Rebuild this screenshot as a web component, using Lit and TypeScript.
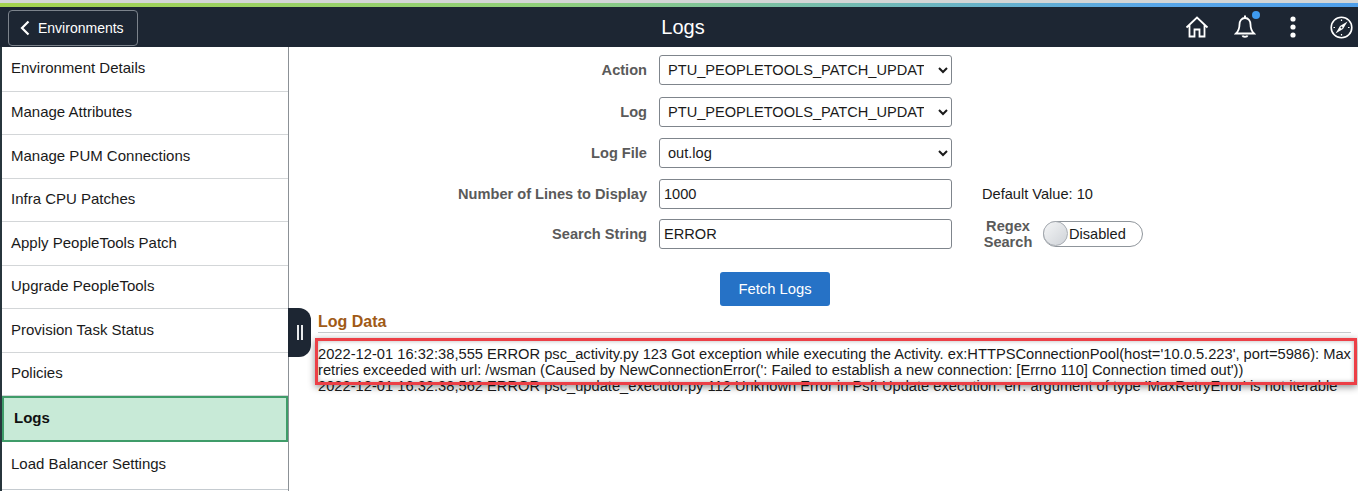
import { LitElement, html, css } from "lit";
import { customElement } from "lit/decorators.js";

const NAV = [
  ["Environment Details", 45], ["Manage Attributes", 43], ["Manage PUM Connections", 44], ["Infra CPU Patches", 43],
  ["Apply PeopleTools Patch", 44], ["Upgrade PeopleTools", 43], ["Provision Task Status", 44], ["Policies", 43],
] as const;

@customElement("app-root")
export class AppRoot extends LitElement {
  static styles = css`
    :host { display: block; width: 1358px; height: 491px; overflow: hidden; background: #fff; font-family: "Liberation Sans", Arial, sans-serif; color: #1a1a1a; position: relative; }
    * { box-sizing: border-box; }
    .strip { height: 7px; border-top: 3px solid #d4d6d6; background: linear-gradient(90deg, #a4d34e 0%, #8fcf7a 40%, #58a6e8 85%, #4f9fea 100%); }
    .bar { height: 40px; background: #1d2633; display: flex; align-items: center; padding: 0 0 0 8px; position: relative; }
    .back { width: 130px; height: 36px; margin-top: 1px; border: 1px solid #7c838c; border-radius: 4px; display: flex; align-items: center; gap: 8px; padding-left: 11px; color: #fff; font-size: 14px; }
    .title { position: absolute; left: 8px; right: 0; top: 0; height: 40px; line-height: 40px; text-align: center; color: #fff; font-size: 20px; }
    .icons { margin-left: auto; display: flex; align-items: center; position: relative; z-index: 1; height: 40px; padding-right: 5px; }
    .icons svg { display: block; }
    .home { margin-right: 25px; }
    .bell-wrap { position: relative; margin-right: 34px; }
    .dot { position: absolute; left: 18px; top: -4px; width: 8px; height: 8px; border-radius: 50%; background: #3f9bf0; }
    .dots { margin-right: 34px; }
    .body { display: flex; height: 444px; border-left: 2px solid #27353c; }
    .side { width: 287px; flex: none; border-right: 1px solid #8c9196; height: 100%; }
    .item { display: flex; align-items: center; padding: 0 0 3px 9px; font-size: 15px; color: #1a1a1a; border-bottom: 1px solid #d3d6d8; }
    .item.active { height: 46px; padding: 0 0 3px 10px; background: #c8ead7; border: 2px solid #3f9c69; font-weight: 700; color: #111; }
    .item.lb { height: 48px; padding-bottom: 4px; border-bottom-color: #c5cbd0; }
    .main { flex: 1; min-width: 0; padding: 8px 0 0 29px; position: relative; }
    .form { display: grid; grid-template-columns: 329px 293px auto; column-gap: 12px; align-items: center; }
    .l { text-align: right; font-size: 14.6px; font-weight: 700; color: #5a5a5a; }
    .f { height: 30px; width: 293px; border: 1px solid #7f858c; border-radius: 3px; background: #fff; font: 14.6px "Liberation Sans", Arial, sans-serif; color: #1a1a1a; padding: 0 4px; margin: 0; display: block; outline: none; }
    select.f { padding: 0 11px 0 4px; }
    .r1 { margin-bottom: 12px; }
    .r2 { margin-bottom: 11px; }
    .r3 { margin-bottom: 9px; }
    .note { padding-left: 18px; font-size: 14.6px; display: flex; align-items: center; }
    .regex { padding-left: 19px; display: flex; align-items: center; gap: 10px; }
    .regex .l { width: 50px; text-align: center; line-height: 16px; }
    .toggle { width: 100px; height: 26px; border: 1px solid #8f959b; border-radius: 13px; display: flex; align-items: center; font-size: 14.6px; color: #1a1a1a; margin-top: -1px; }
    .knob { width: 25px; height: 25px; border-radius: 50%; margin-left: -1px; margin-right: 1px; flex: none; background: linear-gradient(135deg, #f4f5f6, #cfd3d8); border: 1px solid #a8adb3; }
    .actions { display: flex; padding: 22px 0 0 402px; }
    .btn { width: 110px; height: 34px; background: #2672c6; color: #fff; border: none; border-radius: 3px; font: 14.8px "Liberation Sans", Arial, sans-serif; padding: 0; }
    .sec { margin-top: 2px; margin-right: 7px; }
    h2 { margin: 0; height: 25px; font-size: 16px; line-height: 18px; padding-top: 5px; color: #a05a16; border-bottom: 1px solid #c8cbce; font-weight: 700; }
    .log { margin: 0; padding-top: 13px; font-size: 14.7px; line-height: 16px; color: #1a1a1a; }
    .hl { position: absolute; left: 26px; top: 291px; width: 1042px; height: 47px; border: 3px solid #ec3f46; background: transparent; box-shadow: 0 2px 7px rgba(0,0,0,.45), inset 0 0 4px rgba(0,0,0,.3); pointer-events: none; }
    .grip { position: absolute; left: -1px; top: 261px; width: 23px; height: 49px; background: #1d2633; border-radius: 0 12px 12px 0; display: flex; justify-content: center; align-items: center; gap: 2px; }
    .grip i { width: 2px; height: 15px; background: #e8eaec; display: block; }
  `;

  render() {
    return html`
      <div class="strip"></div>
      <div class="bar">
        <div class="back">
          <svg width="10" height="16" viewBox="0 0 10 16"><path d="M8.5 1.500 2 8l6.500 6.500" fill="none" stroke="#fff" stroke-width="2.200"/></svg>
          <span>Environments</span>
        </div>
        <div class="title">Logs</div>
        <div class="icons">
          <svg class="home" width="24" height="22" viewBox="0 0 24 22" fill="none" stroke="#fff" stroke-width="1.800"><path d="M1.500 11.500 12 1.500l10.500 10M4.500 9v11.500H9.500V13.500H14.500V20.500H19.500V9"/></svg>
          <div class="bell-wrap">
            <svg width="22" height="24" viewBox="0 0 22 24" fill="none" stroke="#fff" stroke-width="1.800"><path d="M11 3c-3.600 0-5.500 3-5.500 6.500 0 4.500-1.500 7-3.500 9h18c-2-2-3.500-4.500-3.500-9C16.500 6 14.600 3 11 3Z"/><path d="M11 .5v2.500M8.500 20.500c.5 1.800 4.500 1.800 5 0" stroke-width="2"/></svg>
            <span class="dot"></span>
          </div>
          <svg class="dots" width="6" height="22" viewBox="0 0 6 22" fill="#fff"><circle cx="3" cy="3" r="2.600"/><circle cx="3" cy="11" r="2.600"/><circle cx="3" cy="19" r="2.600"/></svg>
          <svg width="23" height="23" viewBox="0 0 23 23" fill="none" stroke="#fff" stroke-width="1.600"><circle cx="11.500" cy="11.500" r="10.300"/><path d="M17.500 5.500 13 13l-7.500 4.500L10 10Z" fill="#fff" stroke="none"/><circle cx="11.500" cy="11.500" r="1" fill="#1d2633" stroke="none"/><path d="M11.500 3.500v1.500M11.500 18v1.500M3.500 11.500H5M18 11.500h1.500" stroke-width="1.200"/></svg>
        </div>
      </div>
      <div class="body">
        <nav class="side">
          ${NAV.map(([t, h]) => html`<div class="item" style="height:${h}px">${t}</div>`)}
          <div class="item active">Logs</div>
          <div class="item lb">Load Balancer Settings</div>
        </nav>
        <div class="main">
          <div class="form">
            <div class="l r1">Action</div>
            <select class="f r1"><option>PTU_PEOPLETOOLS_PATCH_UPDATE_LOGS</option></select><div class="r1"></div>
            <div class="l r2">Log</div>
            <select class="f r2"><option>PTU_PEOPLETOOLS_PATCH_UPDATE_LOGS</option></select><div class="r2"></div>
            <div class="l r2">Log File</div>
            <select class="f r2"><option>out.log</option></select><div class="r2"></div>
            <div class="l r3">Number of Lines to Display</div>
            <input class="f r3" value="1000" /><div class="note r3">Default Value: 10</div>
            <div class="l">Search String</div>
            <input class="f" value="ERROR" />
            <div class="regex"><div class="l">Regex Search</div><div class="toggle"><span class="knob"></span>Disabled</div></div>
          </div>
          <div class="actions"><button class="btn">Fetch Logs</button></div>
          <div class="sec"><h2>Log Data</h2></div>
          <p class="log">2022-12-01 16:32:38,555 ERROR psc_activity.py 123 Got exception while executing the Activity. ex:HTTPSConnectionPool(host='10.0.5.223', port=5986): Max retries exceeded with url: /wsman (Caused by NewConnectionError(': Failed to establish a new connection: [Errno 110] Connection timed out'))<br />2022-12-01 16:32:38,562 ERROR psc_update_executor.py 112 Unknown Error in Psft Update execution. err: argument of type 'MaxRetryError' is not iterable</p>
          <div class="hl"></div>
          <div class="grip"><i></i><i></i></div>
        </div>
      </div>
    `;
  }
}
